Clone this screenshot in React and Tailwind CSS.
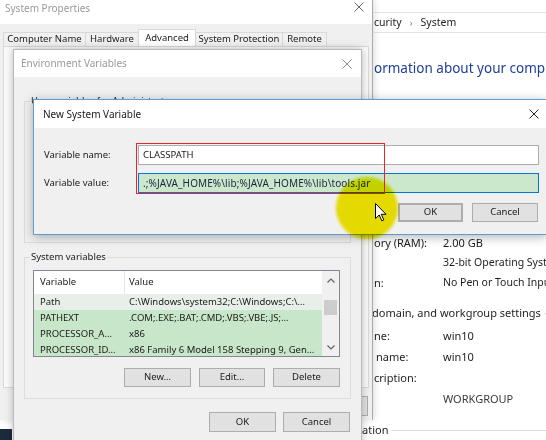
import React from "react";

function CloseX({ className = "" }) {
  return (
    <svg width="10" height="10" viewBox="0 0 10 10" className={className}>
      <path d="M0.5 0.5 L9.5 9.5 M9.5 0.5 L0.5 9.5" stroke="currentColor" strokeWidth="1" fill="none" />
    </svg>
  );
}

function Chevron({ up }) {
  return (
    <svg width="8" height="5" viewBox="0 0 8 5">
      <path d={up ? "M0.5 4.5 L4 1 L7.5 4.5" : "M0.5 0.5 L4 4 L7.5 0.5"} stroke="#606060" strokeWidth="1.2" fill="none" />
    </svg>
  );
}

function Btn({ children, className = "" }) {
  return (
    <div className={`flex items-center justify-center border border-[#adadad] bg-[#e1e1e1] text-[9.5px] text-[#1a1a1a] ${className}`}>
      {children}
    </div>
  );
}

function GroupBox({ label, className = "", children }) {
  return (
    <div className={`relative border border-[#dcdcdc] ${className}`}>
      <span className="absolute left-[5px] -top-[8px] bg-[#f0f0f0] px-[1px] text-[9.5px] leading-[14px] text-[#1a1a1a]">
        {label}
      </span>
      {children}
    </div>
  );
}

function ControlPanel() {
  const row = "flex h-[20px] items-center";
  const label = "w-[69px] shrink-0";
  return (
    <div className="absolute inset-0 flex flex-col bg-white pl-[374px] text-[11px] text-[#1e1e1e] whitespace-nowrap">
      <div className="mt-[12px] flex h-[21px] items-center gap-[8px] border-y border-[#e3e3e3] text-[10.5px]">
        <span>curity</span>
        <span className="text-[9px] text-[#777]">›</span>
        <span>System</span>
      </div>
      <div className="mt-[25px] h-[20px] text-[13.5px] leading-[20px] text-[#22409a]">ormation about your comp</div>

      <div className="mt-[155px] flex flex-col">
        <div className={row}><span className={label}>ory (RAM):</span><span>2.00 GB</span></div>
        <div className={row}><span className={label}></span><span className="text-[10.5px]">32-bit Operating Syst</span></div>
        <div className={row}><span className={label}>n:</span><span className="text-[10.5px]">No Pen or Touch Inpu</span></div>
        <div className="mt-[10px] -ml-[2px] flex h-[20px] items-center">
          <span>domain, and workgroup settings</span>
          <span className="ml-[4px] flex-1 border-t border-[#dcdcdc]" />
        </div>
        <div className="mt-[3px] flex h-[21px] items-center"><span className={label}>ne:</span><span>win10</span></div>
        <div className="flex h-[21px] items-center"><span className={`${label} pl-[2px]`}>name:</span><span>win10</span></div>
        <div className="flex h-[21px] items-center"><span className={label}>cription:</span></div>
        <div className="flex h-[21px] items-center"><span className={label}></span><span className="text-[#3a3a3a]">WORKGROUP</span></div>
        <div className="mt-[10px] -ml-[12px] flex h-[20px] items-center">
          <span>ation</span>
          <span className="ml-[4px] flex-1 border-t border-[#dcdcdc]" />
        </div>
      </div>
    </div>
  );
}

function SystemProperties() {
  const tab = "flex h-[14px] items-center justify-center border border-b-0 border-[#d9d9d9] bg-[#f0f0f0] -ml-px";
  return (
    <div className="absolute left-0 top-0 flex h-[420px] w-[373px] flex-col border-r border-[#a9a9a9] bg-[#f0f0f0] text-[9.5px] text-[#1a1a1a] shadow-[2px_0_6px_rgba(0,0,0,0.12)]">
      <div className="flex h-[24px] shrink-0 items-start justify-between bg-white pl-[5px] pr-[8px]">
        <span className="text-[10px] leading-[16px] text-[#9a9a9a]">System Properties</span>
        <CloseX className="mt-[2px] text-[#666]" />
      </div>
      <div className="flex h-[22px] shrink-0 items-end pl-[4px]">
        <div className={`${tab} w-[83px]`}>Computer Name</div>
        <div className={`${tab} w-[54px]`}>Hardware</div>
        <div className="-ml-px flex h-[17px] w-[58px] items-start justify-center border border-b-0 border-[#d9d9d9] bg-white pt-[1px]">Advanced</div>
        <div className={`${tab} w-[88px]`}>System Protection</div>
        <div className={`${tab} w-[45px]`}>Remote</div>
      </div>
      <div className="mx-[3px] flex-1 border border-[#d9d9d9] bg-[#fafafa]" />
      <div className="mb-[4px] mt-[8px] flex h-[20px] shrink-0 justify-end gap-[7px] pr-[4px]">
        <Btn className="w-[67px]">OK</Btn>
        <Btn className="w-[67px]">Cancel</Btn>
        <Btn className="w-[67px]">Apply</Btn>
      </div>
    </div>
  );
}

const rows = [
  { name: "Path", value: "C:\\Windows\\system32;C:\\Windows;C:\\…", bg: "bg-[#e8efe8]" },
  { name: "PATHEXT", value: ".COM;.EXE;.BAT;.CMD;.VBS;.VBE;.JS;…", bg: "bg-[#c8e6c9]" },
  { name: "PROCESSOR_A…", value: "x86", bg: "bg-[#c8e6c9]" },
  { name: "PROCESSOR_ID…", value: "x86 Family 6 Model 158 Stepping 9, Gen…", bg: "bg-[#c8e6c9]" },
];

function EnvDialog() {
  return (
    <div className="absolute left-[13px] top-[49px] flex h-[410px] w-[349px] flex-col border border-[#b9b9b9] bg-[#f0f0f0] text-[9.5px] text-[#1a1a1a] shadow-[0_0_8px_rgba(0,0,0,0.25)]">
      <div className="flex h-[27px] shrink-0 items-center justify-between bg-white pl-[7px] pr-[9px]">
        <span className="text-[10px] text-[#9a9a9a]">Environment Variables</span>
        <CloseX className="text-[#888]" />
      </div>
      <div className="flex flex-col px-[10px]">
        <GroupBox label="User variables for Administrator" className="mt-[24px] h-[142px]" />
        <GroupBox label="System variables" className="mt-[14px] flex h-[142px] flex-col pl-[8px] pr-[10px] pt-[12px]">
          <div className="flex h-[87px] overflow-hidden border border-[#828790] bg-white">
            <div className="flex flex-1 flex-col">
              <div className="flex h-[23px] shrink-0">
                <div className="flex w-[91px] items-center border-r border-[#e5e5e5] pl-[6px]">Variable</div>
                <div className="flex flex-1 items-center pl-[4px]">Value</div>
              </div>
              {rows.map((r) => (
                <div key={r.name} className={`flex h-[16px] shrink-0 items-center whitespace-nowrap ${r.bg}`}>
                  <div className="w-[91px] overflow-hidden pl-[6px]">{r.name}</div>
                  <div className="flex-1 overflow-hidden pl-[4px]">{r.value}</div>
                </div>
              ))}
            </div>
            <div className="flex w-[17px] flex-col items-center bg-[#f0f0f0]">
              <div className="flex h-[18px] items-center"><Chevron up /></div>
              <div className="mt-[11px] h-[15px] w-[13px] bg-[#cdcdcd]" />
              <div className="flex-1" />
              <div className="flex h-[18px] items-center"><Chevron /></div>
            </div>
          </div>
          <div className="mt-[11px] flex h-[19px] justify-end gap-[8px]">
            <Btn className="w-[67px]">New…</Btn>
            <Btn className="w-[66px]">Edit…</Btn>
            <Btn className="w-[67px]">Delete</Btn>
          </div>
        </GroupBox>
        <div className="mt-[13px] flex h-[20px] justify-end gap-[7px] pr-[1px]">
          <Btn className="w-[67px]">OK</Btn>
          <Btn className="w-[67px]">Cancel</Btn>
        </div>
      </div>
    </div>
  );
}

function NewVarDialog() {
  return (
    <div className="absolute left-[33px] top-[99px] flex h-[136px] w-[514px] flex-col border border-[#5f9bd8] bg-[#f0f0f0] text-[9.5px] text-[#1a1a1a] shadow-[0_2px_10px_rgba(0,0,0,0.3)]">
      <div className="flex h-[28px] shrink-0 items-center justify-between bg-white pl-[9px] pr-[7px]">
        <span className="text-[10px]">New System Variable</span>
        <CloseX className="text-[#222]" />
      </div>
      <div className="flex flex-col pl-[10px] pr-[7px]">
        <div className="mt-[17px] flex h-[20px] items-center">
          <span className="w-[94px]">Variable name:</span>
          <div className="flex h-full flex-1 items-center border border-[#abadb3] bg-white pl-[4px]">CLASSPATH</div>
        </div>
        <div className="mt-[8px] flex h-[20px] items-center">
          <span className="w-[94px]">Variable value:</span>
          <div className="flex h-full flex-1 items-center border border-[#0078d7] bg-[#cbe8cc] pl-[4px] text-[10px] tracking-[0.1px] text-[#1b2440]">
            {".;%JAVA_HOME%\\lib;%JAVA_HOME%\\lib\\tools.jar"}
          </div>
        </div>
        <div className="mt-[10px] flex h-[19px] justify-end gap-[9px] pr-[1px]">
          <Btn className="w-[65px] border-2 border-[#0078d7]">OK</Btn>
          <Btn className="w-[66px]">Cancel</Btn>
        </div>
      </div>
    </div>
  );
}

export default function App() {
  return (
    <div className="relative h-[440px] w-[546px] overflow-hidden bg-white font-['Noto_Sans',sans-serif]">
      <ControlPanel />
      <SystemProperties />
      <div className="absolute bottom-0 left-0 h-[11px] w-[12px] bg-[#1d2b3f]" />
      <EnvDialog />
      <NewVarDialog />
      {/* red annotation box */}
      <div className="absolute left-[136px] top-[143px] h-[51px] w-[249px] border border-[#e5262b]" />
      {/* cursor highlight */}
      <div className="absolute left-[336px] top-[177px] h-[62px] w-[62px] rounded-full bg-[#f3e700] mix-blend-multiply blur-[1.5px]" />
      <svg className="absolute left-[375px] top-[203px]" width="12" height="19" viewBox="0 0 12 19">
        <path d="M0.5 0.5 V15.5 L4.2 12 L6.8 17.8 L8.8 16.9 L6.3 11.3 H11 Z" fill="white" stroke="black" strokeWidth="1" />
      </svg>
    </div>
  );
}
